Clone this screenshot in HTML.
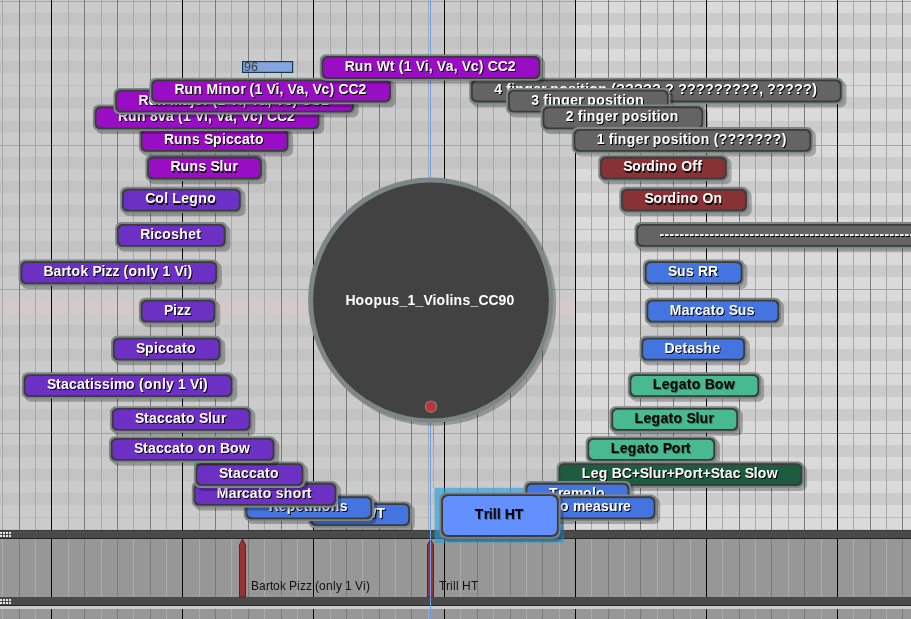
<!DOCTYPE html><html><head><meta charset="utf-8"><style>html,body{margin:0;padding:0;width:911px;height:619px;overflow:hidden;background:#cbcbcb;position:relative}</style></head><body><svg width="911" height="619" style="position:absolute;left:0;top:0;will-change:transform"><g shape-rendering="crispEdges"><rect x="0" y="0" width="575" height="1" fill="#cbcbcb"/><rect x="575" y="0" width="336" height="1" fill="#dadada"/><rect x="0" y="1" width="575" height="12" fill="#cbcbcb"/><rect x="575" y="1" width="336" height="12" fill="#dadada"/><rect x="0" y="13" width="575" height="12" fill="#c3c3c3"/><rect x="575" y="13" width="336" height="12" fill="#cbcbcb"/><rect x="0" y="25" width="575" height="12" fill="#cbcbcb"/><rect x="575" y="25" width="336" height="12" fill="#dadada"/><rect x="0" y="37" width="575" height="12" fill="#c3c3c3"/><rect x="575" y="37" width="336" height="12" fill="#cbcbcb"/><rect x="0" y="49" width="575" height="12" fill="#cbcbcb"/><rect x="575" y="49" width="336" height="12" fill="#dadada"/><rect x="0" y="61" width="575" height="12" fill="#c3c3c3"/><rect x="575" y="61" width="336" height="12" fill="#cbcbcb"/><rect x="0" y="73" width="575" height="12" fill="#cbcbcb"/><rect x="575" y="73" width="336" height="12" fill="#dadada"/><rect x="0" y="85" width="575" height="12" fill="#cbcbcb"/><rect x="575" y="85" width="336" height="12" fill="#dadada"/><rect x="0" y="97" width="575" height="12" fill="#c3c3c3"/><rect x="575" y="97" width="336" height="12" fill="#cbcbcb"/><rect x="0" y="109" width="575" height="12" fill="#cbcbcb"/><rect x="575" y="109" width="336" height="12" fill="#dadada"/><rect x="0" y="121" width="575" height="12" fill="#c3c3c3"/><rect x="575" y="121" width="336" height="12" fill="#cbcbcb"/><rect x="0" y="133" width="575" height="12" fill="#cbcbcb"/><rect x="575" y="133" width="336" height="12" fill="#dadada"/><rect x="0" y="145" width="575" height="12" fill="#cbcbcb"/><rect x="575" y="145" width="336" height="12" fill="#dadada"/><rect x="0" y="157" width="575" height="12" fill="#c3c3c3"/><rect x="575" y="157" width="336" height="12" fill="#cbcbcb"/><rect x="0" y="169" width="575" height="12" fill="#cbcbcb"/><rect x="575" y="169" width="336" height="12" fill="#dadada"/><rect x="0" y="181" width="575" height="12" fill="#c3c3c3"/><rect x="575" y="181" width="336" height="12" fill="#cbcbcb"/><rect x="0" y="193" width="575" height="12" fill="#cbcbcb"/><rect x="575" y="193" width="336" height="12" fill="#dadada"/><rect x="0" y="205" width="575" height="12" fill="#c3c3c3"/><rect x="575" y="205" width="336" height="12" fill="#cbcbcb"/><rect x="0" y="217" width="575" height="12" fill="#cbcbcb"/><rect x="575" y="217" width="336" height="12" fill="#dadada"/><rect x="0" y="229" width="575" height="12" fill="#cbcbcb"/><rect x="575" y="229" width="336" height="12" fill="#dadada"/><rect x="0" y="241" width="575" height="12" fill="#c3c3c3"/><rect x="575" y="241" width="336" height="12" fill="#cbcbcb"/><rect x="0" y="253" width="575" height="12" fill="#cbcbcb"/><rect x="575" y="253" width="336" height="12" fill="#dadada"/><rect x="0" y="265" width="575" height="12" fill="#c3c3c3"/><rect x="575" y="265" width="336" height="12" fill="#cbcbcb"/><rect x="0" y="277" width="575" height="12" fill="#cbcbcb"/><rect x="575" y="277" width="336" height="12" fill="#dadada"/><rect x="0" y="289" width="575" height="12" fill="#cbcbcb"/><rect x="575" y="289" width="336" height="12" fill="#dadada"/><rect x="0" y="301" width="575" height="12" fill="#d6c9c9"/><rect x="575" y="301" width="336" height="12" fill="#cbcbcb"/><rect x="0" y="313" width="575" height="12" fill="#cbcbcb"/><rect x="575" y="313" width="336" height="12" fill="#dadada"/><rect x="0" y="325" width="575" height="12" fill="#c3c3c3"/><rect x="575" y="325" width="336" height="12" fill="#cbcbcb"/><rect x="0" y="337" width="575" height="12" fill="#cbcbcb"/><rect x="575" y="337" width="336" height="12" fill="#dadada"/><rect x="0" y="349" width="575" height="12" fill="#c3c3c3"/><rect x="575" y="349" width="336" height="12" fill="#cbcbcb"/><rect x="0" y="361" width="575" height="12" fill="#cbcbcb"/><rect x="575" y="361" width="336" height="12" fill="#dadada"/><rect x="0" y="373" width="575" height="12" fill="#cbcbcb"/><rect x="575" y="373" width="336" height="12" fill="#dadada"/><rect x="0" y="385" width="575" height="12" fill="#c3c3c3"/><rect x="575" y="385" width="336" height="12" fill="#cbcbcb"/><rect x="0" y="397" width="575" height="12" fill="#cbcbcb"/><rect x="575" y="397" width="336" height="12" fill="#dadada"/><rect x="0" y="409" width="575" height="12" fill="#c3c3c3"/><rect x="575" y="409" width="336" height="12" fill="#cbcbcb"/><rect x="0" y="421" width="575" height="12" fill="#cbcbcb"/><rect x="575" y="421" width="336" height="12" fill="#dadada"/><rect x="0" y="433" width="575" height="12" fill="#cbcbcb"/><rect x="575" y="433" width="336" height="12" fill="#dadada"/><rect x="0" y="445" width="575" height="12" fill="#c3c3c3"/><rect x="575" y="445" width="336" height="12" fill="#cbcbcb"/><rect x="0" y="457" width="575" height="12" fill="#cbcbcb"/><rect x="575" y="457" width="336" height="12" fill="#dadada"/><rect x="0" y="469" width="575" height="12" fill="#c3c3c3"/><rect x="575" y="469" width="336" height="12" fill="#cbcbcb"/><rect x="0" y="481" width="575" height="12" fill="#cbcbcb"/><rect x="575" y="481" width="336" height="12" fill="#dadada"/><rect x="0" y="493" width="575" height="12" fill="#c3c3c3"/><rect x="575" y="493" width="336" height="12" fill="#cbcbcb"/><rect x="0" y="505" width="575" height="12" fill="#cbcbcb"/><rect x="575" y="505" width="336" height="12" fill="#dadada"/><rect x="0" y="517" width="575" height="12" fill="#cbcbcb"/><rect x="575" y="517" width="336" height="12" fill="#dadada"/><rect x="0" y="529" width="575" height="1" fill="#c3c3c3"/><rect x="575" y="529" width="336" height="1" fill="#cbcbcb"/><rect x="0" y="1" width="911" height="1" fill="#a4a4a4"/><rect x="0" y="85" width="911" height="1" fill="#bdbdbd"/><rect x="0" y="145" width="911" height="1" fill="#a4a4a4"/><rect x="0" y="229" width="911" height="1" fill="#bdbdbd"/><rect x="0" y="289" width="911" height="1" fill="#a4a4a4"/><rect x="0" y="373" width="911" height="1" fill="#bdbdbd"/><rect x="0" y="433" width="911" height="1" fill="#a4a4a4"/><rect x="0" y="517" width="911" height="1" fill="#bdbdbd"/><rect x="2" y="0" width="1" height="530" fill="#a8a8a8"/><rect x="19" y="0" width="1" height="530" fill="#7a7a7a"/><rect x="35" y="0" width="1" height="530" fill="#a8a8a8"/><rect x="51" y="0" width="1" height="530" fill="#060606"/><rect x="68" y="0" width="1" height="530" fill="#a8a8a8"/><rect x="84" y="0" width="1" height="530" fill="#7a7a7a"/><rect x="101" y="0" width="1" height="530" fill="#a8a8a8"/><rect x="117" y="0" width="1" height="530" fill="#7a7a7a"/><rect x="133" y="0" width="1" height="530" fill="#a8a8a8"/><rect x="150" y="0" width="1" height="530" fill="#7a7a7a"/><rect x="166" y="0" width="1" height="530" fill="#a8a8a8"/><rect x="182" y="0" width="1" height="530" fill="#060606"/><rect x="199" y="0" width="1" height="530" fill="#a8a8a8"/><rect x="215" y="0" width="1" height="530" fill="#7a7a7a"/><rect x="231" y="0" width="1" height="530" fill="#a8a8a8"/><rect x="248" y="0" width="1" height="530" fill="#7a7a7a"/><rect x="264" y="0" width="1" height="530" fill="#a8a8a8"/><rect x="281" y="0" width="1" height="530" fill="#7a7a7a"/><rect x="297" y="0" width="1" height="530" fill="#a8a8a8"/><rect x="313" y="0" width="1" height="530" fill="#060606"/><rect x="330" y="0" width="1" height="530" fill="#a8a8a8"/><rect x="346" y="0" width="1" height="530" fill="#7a7a7a"/><rect x="362" y="0" width="1" height="530" fill="#a8a8a8"/><rect x="379" y="0" width="1" height="530" fill="#7a7a7a"/><rect x="395" y="0" width="1" height="530" fill="#a8a8a8"/><rect x="411" y="0" width="1" height="530" fill="#7a7a7a"/><rect x="428" y="0" width="1" height="530" fill="#a8a8a8"/><rect x="444" y="0" width="1" height="530" fill="#060606"/><rect x="460" y="0" width="1" height="530" fill="#a8a8a8"/><rect x="477" y="0" width="1" height="530" fill="#7a7a7a"/><rect x="493" y="0" width="1" height="530" fill="#a8a8a8"/><rect x="510" y="0" width="1" height="530" fill="#7a7a7a"/><rect x="526" y="0" width="1" height="530" fill="#a8a8a8"/><rect x="542" y="0" width="1" height="530" fill="#7a7a7a"/><rect x="559" y="0" width="1" height="530" fill="#a8a8a8"/><rect x="575" y="0" width="1" height="530" fill="#060606"/><rect x="591" y="0" width="1" height="530" fill="#a8a8a8"/><rect x="608" y="0" width="1" height="530" fill="#7a7a7a"/><rect x="624" y="0" width="1" height="530" fill="#a8a8a8"/><rect x="640" y="0" width="1" height="530" fill="#7a7a7a"/><rect x="657" y="0" width="1" height="530" fill="#a8a8a8"/><rect x="673" y="0" width="1" height="530" fill="#7a7a7a"/><rect x="690" y="0" width="1" height="530" fill="#a8a8a8"/><rect x="706" y="0" width="1" height="530" fill="#060606"/><rect x="722" y="0" width="1" height="530" fill="#a8a8a8"/><rect x="739" y="0" width="1" height="530" fill="#7a7a7a"/><rect x="755" y="0" width="1" height="530" fill="#a8a8a8"/><rect x="771" y="0" width="1" height="530" fill="#7a7a7a"/><rect x="788" y="0" width="1" height="530" fill="#a8a8a8"/><rect x="804" y="0" width="1" height="530" fill="#7a7a7a"/><rect x="821" y="0" width="1" height="530" fill="#a8a8a8"/><rect x="837" y="0" width="1" height="530" fill="#060606"/><rect x="853" y="0" width="1" height="530" fill="#a8a8a8"/><rect x="870" y="0" width="1" height="530" fill="#7a7a7a"/><rect x="886" y="0" width="1" height="530" fill="#a8a8a8"/><rect x="902" y="0" width="1" height="530" fill="#7a7a7a"/><rect x="0" y="530" width="911" height="9" fill="#4a4a4a"/><rect x="0" y="530" width="911" height="1" fill="#3c3c3c"/><rect x="0" y="538" width="911" height="1" fill="#232323"/><rect x="0" y="539" width="911" height="58" fill="#979797"/><rect x="0" y="597" width="911" height="9" fill="#4a4a4a"/><rect x="0" y="605" width="911" height="1" fill="#232323"/><rect x="0" y="606" width="911" height="3" fill="#cbcbcb"/><rect x="0" y="609" width="911" height="10" fill="#979797"/><rect x="2" y="539" width="1" height="58" fill="#ababab"/><rect x="2" y="609" width="1" height="10" fill="#ababab"/><rect x="19" y="539" width="1" height="58" fill="#7a7a7a"/><rect x="19" y="609" width="1" height="10" fill="#7a7a7a"/><rect x="35" y="539" width="1" height="58" fill="#ababab"/><rect x="35" y="609" width="1" height="10" fill="#ababab"/><rect x="51" y="539" width="1" height="58" fill="#050505"/><rect x="51" y="609" width="1" height="10" fill="#050505"/><rect x="68" y="539" width="1" height="58" fill="#ababab"/><rect x="68" y="609" width="1" height="10" fill="#ababab"/><rect x="84" y="539" width="1" height="58" fill="#7a7a7a"/><rect x="84" y="609" width="1" height="10" fill="#7a7a7a"/><rect x="101" y="539" width="1" height="58" fill="#ababab"/><rect x="101" y="609" width="1" height="10" fill="#ababab"/><rect x="117" y="539" width="1" height="58" fill="#7a7a7a"/><rect x="117" y="609" width="1" height="10" fill="#7a7a7a"/><rect x="133" y="539" width="1" height="58" fill="#ababab"/><rect x="133" y="609" width="1" height="10" fill="#ababab"/><rect x="150" y="539" width="1" height="58" fill="#7a7a7a"/><rect x="150" y="609" width="1" height="10" fill="#7a7a7a"/><rect x="166" y="539" width="1" height="58" fill="#ababab"/><rect x="166" y="609" width="1" height="10" fill="#ababab"/><rect x="182" y="539" width="1" height="58" fill="#050505"/><rect x="182" y="609" width="1" height="10" fill="#050505"/><rect x="199" y="539" width="1" height="58" fill="#ababab"/><rect x="199" y="609" width="1" height="10" fill="#ababab"/><rect x="215" y="539" width="1" height="58" fill="#7a7a7a"/><rect x="215" y="609" width="1" height="10" fill="#7a7a7a"/><rect x="231" y="539" width="1" height="58" fill="#ababab"/><rect x="231" y="609" width="1" height="10" fill="#ababab"/><rect x="248" y="539" width="1" height="58" fill="#7a7a7a"/><rect x="248" y="609" width="1" height="10" fill="#7a7a7a"/><rect x="264" y="539" width="1" height="58" fill="#ababab"/><rect x="264" y="609" width="1" height="10" fill="#ababab"/><rect x="281" y="539" width="1" height="58" fill="#7a7a7a"/><rect x="281" y="609" width="1" height="10" fill="#7a7a7a"/><rect x="297" y="539" width="1" height="58" fill="#ababab"/><rect x="297" y="609" width="1" height="10" fill="#ababab"/><rect x="313" y="539" width="1" height="58" fill="#050505"/><rect x="313" y="609" width="1" height="10" fill="#050505"/><rect x="330" y="539" width="1" height="58" fill="#ababab"/><rect x="330" y="609" width="1" height="10" fill="#ababab"/><rect x="346" y="539" width="1" height="58" fill="#7a7a7a"/><rect x="346" y="609" width="1" height="10" fill="#7a7a7a"/><rect x="362" y="539" width="1" height="58" fill="#ababab"/><rect x="362" y="609" width="1" height="10" fill="#ababab"/><rect x="379" y="539" width="1" height="58" fill="#7a7a7a"/><rect x="379" y="609" width="1" height="10" fill="#7a7a7a"/><rect x="395" y="539" width="1" height="58" fill="#ababab"/><rect x="395" y="609" width="1" height="10" fill="#ababab"/><rect x="411" y="539" width="1" height="58" fill="#7a7a7a"/><rect x="411" y="609" width="1" height="10" fill="#7a7a7a"/><rect x="428" y="539" width="1" height="58" fill="#ababab"/><rect x="428" y="609" width="1" height="10" fill="#ababab"/><rect x="444" y="539" width="1" height="58" fill="#050505"/><rect x="444" y="609" width="1" height="10" fill="#050505"/><rect x="460" y="539" width="1" height="58" fill="#ababab"/><rect x="460" y="609" width="1" height="10" fill="#ababab"/><rect x="477" y="539" width="1" height="58" fill="#7a7a7a"/><rect x="477" y="609" width="1" height="10" fill="#7a7a7a"/><rect x="493" y="539" width="1" height="58" fill="#ababab"/><rect x="493" y="609" width="1" height="10" fill="#ababab"/><rect x="510" y="539" width="1" height="58" fill="#7a7a7a"/><rect x="510" y="609" width="1" height="10" fill="#7a7a7a"/><rect x="526" y="539" width="1" height="58" fill="#ababab"/><rect x="526" y="609" width="1" height="10" fill="#ababab"/><rect x="542" y="539" width="1" height="58" fill="#7a7a7a"/><rect x="542" y="609" width="1" height="10" fill="#7a7a7a"/><rect x="559" y="539" width="1" height="58" fill="#ababab"/><rect x="559" y="609" width="1" height="10" fill="#ababab"/><rect x="575" y="539" width="1" height="58" fill="#050505"/><rect x="575" y="609" width="1" height="10" fill="#050505"/><rect x="591" y="539" width="1" height="58" fill="#ababab"/><rect x="591" y="609" width="1" height="10" fill="#ababab"/><rect x="608" y="539" width="1" height="58" fill="#7a7a7a"/><rect x="608" y="609" width="1" height="10" fill="#7a7a7a"/><rect x="624" y="539" width="1" height="58" fill="#ababab"/><rect x="624" y="609" width="1" height="10" fill="#ababab"/><rect x="640" y="539" width="1" height="58" fill="#7a7a7a"/><rect x="640" y="609" width="1" height="10" fill="#7a7a7a"/><rect x="657" y="539" width="1" height="58" fill="#ababab"/><rect x="657" y="609" width="1" height="10" fill="#ababab"/><rect x="673" y="539" width="1" height="58" fill="#7a7a7a"/><rect x="673" y="609" width="1" height="10" fill="#7a7a7a"/><rect x="690" y="539" width="1" height="58" fill="#ababab"/><rect x="690" y="609" width="1" height="10" fill="#ababab"/><rect x="706" y="539" width="1" height="58" fill="#050505"/><rect x="706" y="609" width="1" height="10" fill="#050505"/><rect x="722" y="539" width="1" height="58" fill="#ababab"/><rect x="722" y="609" width="1" height="10" fill="#ababab"/><rect x="739" y="539" width="1" height="58" fill="#7a7a7a"/><rect x="739" y="609" width="1" height="10" fill="#7a7a7a"/><rect x="755" y="539" width="1" height="58" fill="#ababab"/><rect x="755" y="609" width="1" height="10" fill="#ababab"/><rect x="771" y="539" width="1" height="58" fill="#7a7a7a"/><rect x="771" y="609" width="1" height="10" fill="#7a7a7a"/><rect x="788" y="539" width="1" height="58" fill="#ababab"/><rect x="788" y="609" width="1" height="10" fill="#ababab"/><rect x="804" y="539" width="1" height="58" fill="#7a7a7a"/><rect x="804" y="609" width="1" height="10" fill="#7a7a7a"/><rect x="821" y="539" width="1" height="58" fill="#ababab"/><rect x="821" y="609" width="1" height="10" fill="#ababab"/><rect x="837" y="539" width="1" height="58" fill="#050505"/><rect x="837" y="609" width="1" height="10" fill="#050505"/><rect x="853" y="539" width="1" height="58" fill="#ababab"/><rect x="853" y="609" width="1" height="10" fill="#ababab"/><rect x="870" y="539" width="1" height="58" fill="#7a7a7a"/><rect x="870" y="609" width="1" height="10" fill="#7a7a7a"/><rect x="886" y="539" width="1" height="58" fill="#ababab"/><rect x="886" y="609" width="1" height="10" fill="#ababab"/><rect x="902" y="539" width="1" height="58" fill="#7a7a7a"/><rect x="902" y="609" width="1" height="10" fill="#7a7a7a"/><rect x="0" y="532" width="2" height="2" fill="#e6e6e6"/><rect x="0" y="535" width="2" height="2" fill="#e6e6e6"/><rect x="3" y="532" width="2" height="2" fill="#e6e6e6"/><rect x="3" y="535" width="2" height="2" fill="#e6e6e6"/><rect x="6" y="532" width="2" height="2" fill="#e6e6e6"/><rect x="6" y="535" width="2" height="2" fill="#e6e6e6"/><rect x="9" y="532" width="2" height="2" fill="#e6e6e6"/><rect x="9" y="535" width="2" height="2" fill="#e6e6e6"/><rect x="0" y="599" width="2" height="2" fill="#e6e6e6"/><rect x="0" y="602" width="2" height="2" fill="#e6e6e6"/><rect x="3" y="599" width="2" height="2" fill="#e6e6e6"/><rect x="3" y="602" width="2" height="2" fill="#e6e6e6"/><rect x="6" y="599" width="2" height="2" fill="#e6e6e6"/><rect x="6" y="602" width="2" height="2" fill="#e6e6e6"/><rect x="9" y="599" width="2" height="2" fill="#e6e6e6"/><rect x="9" y="602" width="2" height="2" fill="#e6e6e6"/></g><path d="M239.5 597 L239.5 545 L242.5 539 L245.5 545 L245.5 597 Z" fill="#993333" stroke="#6b1d1d" stroke-width="1"/><path d="M427.5 597 L427.5 545 L430.5 539 L433.5 545 L433.5 597 Z" fill="#993333" stroke="#6b1d1d" stroke-width="1"/><g transform="translate(0,589.50) scale(1,1.0)"><text x="251.0 259.0 266.0 270.0 273.0 280.0 286.0 289.0 297.0 300.0 306.0 312.0 315.0 319.0 326.0 333.0 336.0 342.0 345.0 352.0 355.0 363.0 366.0" y="0" font-family="Liberation Sans" font-weight="normal" font-size="12" fill="#111">Bartok Pizz (only 1 Vi)</text></g><g transform="translate(0,589.50) scale(1,1.0)"><text x="439.0 446.0 450.0 453.0 456.0 459.0 462.0 471.0" y="0" font-family="Liberation Sans" font-weight="normal" font-size="12" fill="#111">Trill HT</text></g><rect x="430" y="0" width="1" height="619" fill="#6fa0ef" shape-rendering="crispEdges"/><rect x="242.6" y="61.6" width="50" height="10.8" fill="#86a5dc" stroke="#0f3a58" stroke-width="1.2"/><text x="244" y="70.6" font-family="Liberation Sans" font-size="12.5" fill="#3c3c3c">96</text><circle cx="433.7" cy="303.2" r="122.6" fill="rgba(0,0,0,0.25)"/><circle cx="430.7" cy="300.2" r="122.6" fill="#7d8786"/><circle cx="431.0" cy="300.5" r="117.9" fill="#424242"/><g transform="translate(0,305.20) scale(1,1.1)"><text x="345.6 355.6 364.6 373.6 382.6 391.6 399.6 407.6 415.6 423.6 432.6 436.6 445.6 449.6 453.6 462.6 470.6 478.6 488.6 498.6 506.6" y="0" font-family="Liberation Sans" font-weight="bold" font-size="14" fill="#fff">Hoopus_1_Violins_CC90</text></g><circle cx="431" cy="406.6" r="6.2" fill="#7d8786"/><circle cx="431" cy="406.6" r="5" fill="#bf3434"/><rect x="433" y="423" width="1" height="20" fill="#4ab0e0" shape-rendering="crispEdges"/><rect x="433" y="443" width="1" height="45" fill="rgba(74,176,224,0.55)" shape-rendering="crispEdges"/><rect x="434.5" y="487.8" width="129.5" height="54.7" fill="rgba(30,160,225,0.62)"/><rect x="472.16" y="80.69" width="374.30" height="26.50" rx="6" fill="rgba(0,0,0,0.25)"/><rect x="469.16" y="77.69" width="374.30" height="26.50" rx="6" fill="#7d8786"/><rect x="470.96" y="79.49" width="370.70" height="22.90" rx="5.40" fill="#3b3b3b"/><rect x="472.76" y="81.29" width="367.10" height="19.30" rx="4.60" fill="#646464"/><g transform="translate(0,94.34) scale(1,1.1)"><text x="495.2 503.2 507.2 512.2 516.2 525.2 534.2 542.2 547.2 551.2 560.2 569.2 577.2 581.2 586.2 590.2 599.2 608.2 612.2 617.2 626.2 635.2 644.2 653.2 662.2 666.2 675.2 679.2 688.2 697.2 706.2 715.2 724.2 733.2 742.2 751.2 760.2 764.2 768.2 777.2 786.2 795.2 804.2 813.2" y="1" font-family="Liberation Sans" font-weight="bold" font-size="14" fill="#000">4 finger position (????? ? ?????????, ?????)</text><text x="494.2 502.2 506.2 511.2 515.2 524.2 533.2 541.2 546.2 550.2 559.2 568.2 576.2 580.2 585.2 589.2 598.2 607.2 611.2 616.2 625.2 634.2 643.2 652.2 661.2 665.2 674.2 678.2 687.2 696.2 705.2 714.2 723.2 732.2 741.2 750.2 759.2 763.2 767.2 776.2 785.2 794.2 803.2 812.2" y="0" font-family="Liberation Sans" font-weight="bold" font-size="14" fill="#fff">4 finger position (????? ? ?????????, ?????)</text></g><rect x="509.14" y="90.90" width="164.30" height="26.50" rx="6" fill="rgba(0,0,0,0.25)"/><rect x="506.14" y="87.90" width="164.30" height="26.50" rx="6" fill="#7d8786"/><rect x="507.94" y="89.70" width="160.70" height="22.90" rx="5.40" fill="#3b3b3b"/><rect x="509.74" y="91.50" width="157.10" height="19.30" rx="4.60" fill="#646464"/><g transform="translate(0,104.55) scale(1,1.1)"><text x="532.2 540.2 544.2 549.2 553.2 562.2 571.2 579.2 584.2 588.2 597.2 606.2 614.2 618.2 623.2 627.2 636.2" y="1" font-family="Liberation Sans" font-weight="bold" font-size="14" fill="#000">3 finger position</text><text x="531.2 539.2 543.2 548.2 552.2 561.2 570.2 578.2 583.2 587.2 596.2 605.2 613.2 617.2 622.2 626.2 635.2" y="0" font-family="Liberation Sans" font-weight="bold" font-size="14" fill="#fff">3 finger position</text></g><rect x="543.71" y="107.54" width="164.30" height="26.50" rx="6" fill="rgba(0,0,0,0.25)"/><rect x="540.71" y="104.54" width="164.30" height="26.50" rx="6" fill="#7d8786"/><rect x="542.51" y="106.34" width="160.70" height="22.90" rx="5.40" fill="#3b3b3b"/><rect x="544.31" y="108.14" width="157.10" height="19.30" rx="4.60" fill="#646464"/><g transform="translate(0,121.19) scale(1,1.1)"><text x="566.8 574.8 578.8 583.8 587.8 596.8 605.8 613.8 618.8 622.8 631.8 640.8 648.8 652.8 657.8 661.8 670.8" y="1" font-family="Liberation Sans" font-weight="bold" font-size="14" fill="#000">2 finger position</text><text x="565.8 573.8 577.8 582.8 586.8 595.8 604.8 612.8 617.8 621.8 630.8 639.8 647.8 651.8 656.8 660.8 669.8" y="0" font-family="Liberation Sans" font-weight="bold" font-size="14" fill="#fff">2 finger position</text></g><rect x="574.75" y="130.09" width="241.30" height="26.50" rx="6" fill="rgba(0,0,0,0.25)"/><rect x="571.75" y="127.09" width="241.30" height="26.50" rx="6" fill="#7d8786"/><rect x="573.55" y="128.89" width="237.70" height="22.90" rx="5.40" fill="#3b3b3b"/><rect x="575.35" y="130.69" width="234.10" height="19.30" rx="4.60" fill="#646464"/><g transform="translate(0,143.74) scale(1,1.1)"><text x="597.8 605.8 609.8 614.8 618.8 627.8 636.8 644.8 649.8 653.8 662.8 671.8 679.8 683.8 688.8 692.8 701.8 710.8 714.8 719.8 728.8 737.8 746.8 755.8 764.8 773.8 782.8" y="1" font-family="Liberation Sans" font-weight="bold" font-size="14" fill="#000">1 finger position (???????)</text><text x="596.8 604.8 608.8 613.8 617.8 626.8 635.8 643.8 648.8 652.8 661.8 670.8 678.8 682.8 687.8 691.8 700.8 709.8 713.8 718.8 727.8 736.8 745.8 754.8 763.8 772.8 781.8" y="0" font-family="Liberation Sans" font-weight="bold" font-size="14" fill="#fff">1 finger position (???????)</text></g><rect x="601.26" y="157.82" width="130.30" height="26.50" rx="6" fill="rgba(0,0,0,0.25)"/><rect x="598.26" y="154.82" width="130.30" height="26.50" rx="6" fill="#7d8786"/><rect x="600.06" y="156.62" width="126.70" height="22.90" rx="5.40" fill="#3b3b3b"/><rect x="601.86" y="158.42" width="123.10" height="19.30" rx="4.60" fill="#883235"/><g transform="translate(0,171.47) scale(1,1.1)"><text x="624.3 633.3 642.3 647.3 656.3 660.3 669.3 678.3 682.3 693.3 698.3" y="1" font-family="Liberation Sans" font-weight="bold" font-size="14" fill="#000">Sordino Off</text><text x="623.3 632.3 641.3 646.3 655.3 659.3 668.3 677.3 681.3 692.3 697.3" y="0" font-family="Liberation Sans" font-weight="bold" font-size="14" fill="#fff">Sordino Off</text></g><rect x="622.40" y="189.84" width="129.30" height="26.50" rx="6" fill="rgba(0,0,0,0.25)"/><rect x="619.40" y="186.84" width="129.30" height="26.50" rx="6" fill="#7d8786"/><rect x="621.20" y="188.64" width="125.70" height="22.90" rx="5.40" fill="#3b3b3b"/><rect x="623.00" y="190.44" width="122.10" height="19.30" rx="4.60" fill="#883235"/><g transform="translate(0,203.49) scale(1,1.1)"><text x="645.4 654.4 663.4 668.4 677.4 681.4 690.4 699.4 703.4 714.4" y="1" font-family="Liberation Sans" font-weight="bold" font-size="14" fill="#000">Sordino On</text><text x="644.4 653.4 662.4 667.4 676.4 680.4 689.4 698.4 702.4 713.4" y="0" font-family="Liberation Sans" font-weight="bold" font-size="14" fill="#fff">Sordino On</text></g><rect x="637.48" y="225.12" width="401.30" height="26.50" rx="6" fill="rgba(0,0,0,0.25)"/><rect x="634.48" y="222.12" width="401.30" height="26.50" rx="6" fill="#7d8786"/><rect x="636.28" y="223.92" width="397.70" height="22.90" rx="5.40" fill="#3b3b3b"/><rect x="638.08" y="225.72" width="394.10" height="19.30" rx="4.60" fill="#646464"/><g transform="translate(0,238.77) scale(1,1.1)"><text x="660.5 665.5 670.5 675.5 680.5 685.5 690.5 695.5 700.5 705.5 710.5 715.5 720.5 725.5 730.5 735.5 740.5 745.5 750.5 755.5 760.5 765.5 770.5 775.5 780.5 785.5 790.5 795.5 800.5 805.5 810.5 815.5 820.5 825.5 830.5 835.5 840.5 845.5 850.5 855.5 860.5 865.5 870.5 875.5 880.5 885.5 890.5 895.5 900.5 905.5 910.5 915.5 920.5 925.5 930.5 935.5 940.5 945.5 950.5 955.5 960.5 965.5 970.5 975.5 980.5 985.5 990.5 995.5 1000.5 1005.5" y="1" font-family="Liberation Sans" font-weight="bold" font-size="14" fill="#000">----------------------------------------------------------------------</text><text x="659.5 664.5 669.5 674.5 679.5 684.5 689.5 694.5 699.5 704.5 709.5 714.5 719.5 724.5 729.5 734.5 739.5 744.5 749.5 754.5 759.5 764.5 769.5 774.5 779.5 784.5 789.5 794.5 799.5 804.5 809.5 814.5 819.5 824.5 829.5 834.5 839.5 844.5 849.5 854.5 859.5 864.5 869.5 874.5 879.5 884.5 889.5 894.5 899.5 904.5 909.5 914.5 919.5 924.5 929.5 934.5 939.5 944.5 949.5 954.5 959.5 964.5 969.5 974.5 979.5 984.5 989.5 994.5 999.5 1004.5" y="0" font-family="Liberation Sans" font-weight="bold" font-size="14" fill="#fff">----------------------------------------------------------------------</text></g><rect x="646.01" y="262.52" width="101.30" height="26.50" rx="6" fill="rgba(0,0,0,0.25)"/><rect x="643.01" y="259.52" width="101.30" height="26.50" rx="6" fill="#7d8786"/><rect x="644.81" y="261.32" width="97.70" height="22.90" rx="5.40" fill="#3b3b3b"/><rect x="646.61" y="263.12" width="94.10" height="19.30" rx="4.60" fill="#4374e0"/><g transform="translate(0,276.17) scale(1,1.1)"><text x="669.1 678.1 687.1 695.1 699.1 709.1" y="1" font-family="Liberation Sans" font-weight="bold" font-size="14" fill="#000">Sus RR</text><text x="668.1 677.1 686.1 694.1 698.1 708.1" y="0" font-family="Liberation Sans" font-weight="bold" font-size="14" fill="#fff">Sus RR</text></g><rect x="647.73" y="300.85" width="136.30" height="26.50" rx="6" fill="rgba(0,0,0,0.25)"/><rect x="644.73" y="297.85" width="136.30" height="26.50" rx="6" fill="#7d8786"/><rect x="646.53" y="299.65" width="132.70" height="22.90" rx="5.40" fill="#3b3b3b"/><rect x="648.33" y="301.45" width="129.10" height="19.30" rx="4.60" fill="#4374e0"/><g transform="translate(0,314.50) scale(1,1.1)"><text x="670.8 682.8 690.8 695.8 703.8 711.8 716.8 725.8 729.8 738.8 747.8" y="1" font-family="Liberation Sans" font-weight="bold" font-size="14" fill="#000">Marcato Sus</text><text x="669.8 681.8 689.8 694.8 702.8 710.8 715.8 724.8 728.8 737.8 746.8" y="0" font-family="Liberation Sans" font-weight="bold" font-size="14" fill="#fff">Marcato Sus</text></g><rect x="642.58" y="338.87" width="107.30" height="26.50" rx="6" fill="rgba(0,0,0,0.25)"/><rect x="639.58" y="335.87" width="107.30" height="26.50" rx="6" fill="#7d8786"/><rect x="641.38" y="337.67" width="103.70" height="22.90" rx="5.40" fill="#3b3b3b"/><rect x="643.18" y="339.47" width="100.10" height="19.30" rx="4.60" fill="#4374e0"/><g transform="translate(0,352.52) scale(1,1.1)"><text x="665.6 675.6 683.6 688.6 696.6 704.6 713.6" y="1" font-family="Liberation Sans" font-weight="bold" font-size="14" fill="#000">Detashe</text><text x="664.6 674.6 682.6 687.6 695.6 703.6 712.6" y="0" font-family="Liberation Sans" font-weight="bold" font-size="14" fill="#fff">Detashe</text></g><rect x="630.73" y="375.36" width="133.30" height="26.50" rx="6" fill="rgba(0,0,0,0.25)"/><rect x="627.73" y="372.36" width="133.30" height="26.50" rx="6" fill="#7d8786"/><rect x="629.53" y="374.16" width="129.70" height="22.90" rx="5.40" fill="#3b3b3b"/><rect x="631.33" y="375.96" width="126.10" height="19.30" rx="4.60" fill="#48b991"/><g transform="translate(0,389.01) scale(1,1.1)"><text x="653.8 662.8 670.8 679.8 687.8 692.8 701.8 705.8 715.8 724.8" y="1" font-family="Liberation Sans" font-weight="bold" font-size="14" fill="rgba(0,0,0,0.35)">Legato Bow</text><text x="652.8 661.8 669.8 678.8 686.8 691.8 700.8 704.8 714.8 723.8" y="0" font-family="Liberation Sans" font-weight="bold" font-size="14" fill="#000">Legato Bow</text></g><rect x="612.55" y="409.14" width="130.30" height="26.50" rx="6" fill="rgba(0,0,0,0.25)"/><rect x="609.55" y="406.14" width="130.30" height="26.50" rx="6" fill="#7d8786"/><rect x="611.35" y="407.94" width="126.70" height="22.90" rx="5.40" fill="#3b3b3b"/><rect x="613.15" y="409.74" width="123.10" height="19.30" rx="4.60" fill="#48b991"/><g transform="translate(0,422.79) scale(1,1.1)"><text x="635.6 644.6 652.6 661.6 669.6 674.6 683.6 687.6 696.6 700.6 709.6" y="1" font-family="Liberation Sans" font-weight="bold" font-size="14" fill="rgba(0,0,0,0.35)">Legato Slur</text><text x="634.6 643.6 651.6 660.6 668.6 673.6 682.6 686.6 695.6 699.6 708.6" y="0" font-family="Liberation Sans" font-weight="bold" font-size="14" fill="#000">Legato Slur</text></g><rect x="588.63" y="439.14" width="131.30" height="26.50" rx="6" fill="rgba(0,0,0,0.25)"/><rect x="585.63" y="436.14" width="131.30" height="26.50" rx="6" fill="#7d8786"/><rect x="587.43" y="437.94" width="127.70" height="22.90" rx="5.40" fill="#3b3b3b"/><rect x="589.23" y="439.74" width="124.10" height="19.30" rx="4.60" fill="#48b991"/><g transform="translate(0,452.79) scale(1,1.1)"><text x="611.7 620.7 628.7 637.7 645.7 650.7 659.7 663.7 672.7 681.7 686.7" y="1" font-family="Liberation Sans" font-weight="bold" font-size="14" fill="rgba(0,0,0,0.35)">Legato Port</text><text x="610.7 619.7 627.7 636.7 644.7 649.7 658.7 662.7 671.7 680.7 685.7" y="0" font-family="Liberation Sans" font-weight="bold" font-size="14" fill="#000">Legato Port</text></g><rect x="559.74" y="464.38" width="247.30" height="26.50" rx="6" fill="rgba(0,0,0,0.25)"/><rect x="556.74" y="461.38" width="247.30" height="26.50" rx="6" fill="#7d8786"/><rect x="558.54" y="463.18" width="243.70" height="22.90" rx="5.40" fill="#3b3b3b"/><rect x="560.34" y="464.98" width="240.10" height="19.30" rx="4.60" fill="#1d5c3f"/><g transform="translate(0,478.03) scale(1,1.1)"><text x="582.8 591.8 599.8 608.8 612.8 622.8 632.8 640.8 649.8 653.8 662.8 667.8 675.8 684.8 693.8 698.8 703.8 711.8 720.8 725.8 733.8 741.8 745.8 754.8 758.8 767.8" y="1" font-family="Liberation Sans" font-weight="bold" font-size="14" fill="#000">Leg BC+Slur+Port+Stac Slow</text><text x="581.8 590.8 598.8 607.8 611.8 621.8 631.8 639.8 648.8 652.8 661.8 666.8 674.8 683.8 692.8 697.8 702.8 710.8 719.8 724.8 732.8 740.8 744.8 753.8 757.8 766.8" y="0" font-family="Liberation Sans" font-weight="bold" font-size="14" fill="#fff">Leg BC+Slur+Port+Stac Slow</text></g><rect x="526.80" y="484.06" width="107.30" height="26.50" rx="6" fill="rgba(0,0,0,0.25)"/><rect x="523.80" y="481.06" width="107.30" height="26.50" rx="6" fill="#7d8786"/><rect x="525.60" y="482.86" width="103.70" height="22.90" rx="5.40" fill="#3b3b3b"/><rect x="527.40" y="484.66" width="100.10" height="19.30" rx="4.60" fill="#4374e0"/><g transform="translate(0,497.71) scale(1,1.1)"><text x="549.9 558.9 563.9 571.9 583.9 592.9 596.9" y="1" font-family="Liberation Sans" font-weight="bold" font-size="14" fill="#000">Tremolo</text><text x="548.9 557.9 562.9 570.9 582.9 591.9 595.9" y="0" font-family="Liberation Sans" font-weight="bold" font-size="14" fill="#fff">Tremolo</text></g><rect x="490.88" y="497.54" width="169.30" height="26.50" rx="6" fill="rgba(0,0,0,0.25)"/><rect x="487.88" y="494.54" width="169.30" height="26.50" rx="6" fill="#7d8786"/><rect x="489.68" y="496.34" width="165.70" height="22.90" rx="5.40" fill="#3b3b3b"/><rect x="491.48" y="498.14" width="162.10" height="19.30" rx="4.60" fill="#4374e0"/><g transform="translate(0,511.19) scale(1,1.1)"><text x="513.9 522.9 527.9 535.9 547.9 556.9 560.9 569.9 573.9 585.9 593.9 601.9 609.9 618.9 623.9" y="1" font-family="Liberation Sans" font-weight="bold" font-size="14" fill="#000">Tremolo measure</text><text x="512.9 521.9 526.9 534.9 546.9 555.9 559.9 568.9 572.9 584.9 592.9 600.9 608.9 617.9 622.9" y="0" font-family="Liberation Sans" font-weight="bold" font-size="14" fill="#fff">Tremolo measure</text></g><rect x="311.47" y="504.39" width="103.30" height="26.50" rx="6" fill="rgba(0,0,0,0.25)"/><rect x="308.47" y="501.39" width="103.30" height="26.50" rx="6" fill="#7d8786"/><rect x="310.27" y="503.19" width="99.70" height="22.90" rx="5.40" fill="#3b3b3b"/><rect x="312.07" y="504.99" width="96.10" height="19.30" rx="4.60" fill="#4374e0"/><g transform="translate(0,518.04) scale(1,1.1)"><text x="334.5 343.5 348.5 352.5 356.5 360.5 364.5 377.5" y="1" font-family="Liberation Sans" font-weight="bold" font-size="14" fill="#000">Trill WT</text><text x="333.5 342.5 347.5 351.5 355.5 359.5 363.5 376.5" y="0" font-family="Liberation Sans" font-weight="bold" font-size="14" fill="#fff">Trill WT</text></g><rect x="246.72" y="497.54" width="130.30" height="26.50" rx="6" fill="rgba(0,0,0,0.25)"/><rect x="243.72" y="494.54" width="130.30" height="26.50" rx="6" fill="#7d8786"/><rect x="245.52" y="496.34" width="126.70" height="22.90" rx="5.40" fill="#3b3b3b"/><rect x="247.32" y="498.14" width="123.10" height="19.30" rx="4.60" fill="#4374e0"/><g transform="translate(0,511.19) scale(1,1.1)"><text x="269.8 279.8 287.8 296.8 304.8 309.8 313.8 318.8 322.8 331.8 340.8" y="1" font-family="Liberation Sans" font-weight="bold" font-size="14" fill="#000">Repetitions</text><text x="268.8 278.8 286.8 295.8 303.8 308.8 312.8 317.8 321.8 330.8 339.8" y="0" font-family="Liberation Sans" font-weight="bold" font-size="14" fill="#fff">Repetitions</text></g><rect x="194.80" y="484.06" width="146.30" height="26.50" rx="6" fill="rgba(0,0,0,0.25)"/><rect x="191.80" y="481.06" width="146.30" height="26.50" rx="6" fill="#7d8786"/><rect x="193.60" y="482.86" width="142.70" height="22.90" rx="5.40" fill="#3b3b3b"/><rect x="195.40" y="484.66" width="139.10" height="19.30" rx="4.60" fill="#6c30c5"/><g transform="translate(0,497.71) scale(1,1.1)"><text x="217.8 229.8 237.8 242.8 250.8 258.8 263.8 272.8 276.8 284.8 293.8 302.8 307.8" y="1" font-family="Liberation Sans" font-weight="bold" font-size="14" fill="#000">Marcato short</text><text x="216.8 228.8 236.8 241.8 249.8 257.8 262.8 271.8 275.8 283.8 292.8 301.8 306.8" y="0" font-family="Liberation Sans" font-weight="bold" font-size="14" fill="#fff">Marcato short</text></g><rect x="196.86" y="464.38" width="111.30" height="26.50" rx="6" fill="rgba(0,0,0,0.25)"/><rect x="193.86" y="461.38" width="111.30" height="26.50" rx="6" fill="#7d8786"/><rect x="195.66" y="463.18" width="107.70" height="22.90" rx="5.40" fill="#3b3b3b"/><rect x="197.46" y="464.98" width="104.10" height="19.30" rx="4.60" fill="#6c30c5"/><g transform="translate(0,478.03) scale(1,1.1)"><text x="219.9 228.9 233.9 241.9 249.9 257.9 265.9 270.9" y="1" font-family="Liberation Sans" font-weight="bold" font-size="14" fill="#000">Staccato</text><text x="218.9 227.9 232.9 240.9 248.9 256.9 264.9 269.9" y="0" font-family="Liberation Sans" font-weight="bold" font-size="14" fill="#fff">Staccato</text></g><rect x="111.97" y="439.14" width="167.30" height="26.50" rx="6" fill="rgba(0,0,0,0.25)"/><rect x="108.97" y="436.14" width="167.30" height="26.50" rx="6" fill="#7d8786"/><rect x="110.77" y="437.94" width="163.70" height="22.90" rx="5.40" fill="#3b3b3b"/><rect x="112.57" y="439.74" width="160.10" height="19.30" rx="4.60" fill="#6c30c5"/><g transform="translate(0,452.79) scale(1,1.1)"><text x="135.0 144.0 149.0 157.0 165.0 173.0 181.0 186.0 195.0 199.0 208.0 217.0 221.0 231.0 240.0" y="1" font-family="Liberation Sans" font-weight="bold" font-size="14" fill="#000">Staccato on Bow</text><text x="134.0 143.0 148.0 156.0 164.0 172.0 180.0 185.0 194.0 198.0 207.0 216.0 220.0 230.0 239.0" y="0" font-family="Liberation Sans" font-weight="bold" font-size="14" fill="#fff">Staccato on Bow</text></g><rect x="113.05" y="409.14" width="142.30" height="26.50" rx="6" fill="rgba(0,0,0,0.25)"/><rect x="110.05" y="406.14" width="142.30" height="26.50" rx="6" fill="#7d8786"/><rect x="111.85" y="407.94" width="138.70" height="22.90" rx="5.40" fill="#3b3b3b"/><rect x="113.65" y="409.74" width="135.10" height="19.30" rx="4.60" fill="#6c30c5"/><g transform="translate(0,422.79) scale(1,1.1)"><text x="136.1 145.1 150.1 158.1 166.1 174.1 182.1 187.1 196.1 200.1 209.1 213.1 222.1" y="1" font-family="Liberation Sans" font-weight="bold" font-size="14" fill="#000">Staccato Slur</text><text x="135.1 144.1 149.1 157.1 165.1 173.1 181.1 186.1 195.1 199.1 208.1 212.1 221.1" y="0" font-family="Liberation Sans" font-weight="bold" font-size="14" fill="#fff">Staccato Slur</text></g><rect x="24.87" y="375.36" width="212.30" height="26.50" rx="6" fill="rgba(0,0,0,0.25)"/><rect x="21.87" y="372.36" width="212.30" height="26.50" rx="6" fill="#7d8786"/><rect x="23.67" y="374.16" width="208.70" height="22.90" rx="5.40" fill="#3b3b3b"/><rect x="25.47" y="375.96" width="205.10" height="19.30" rx="4.60" fill="#6c30c5"/><g transform="translate(0,389.01) scale(1,1.1)"><text x="47.9 56.9 61.9 69.9 77.9 85.9 90.9 94.9 102.9 110.9 114.9 126.9 135.9 139.9 144.9 153.9 162.9 166.9 174.9 178.9 186.9 190.9 199.9 203.9" y="1" font-family="Liberation Sans" font-weight="bold" font-size="14" fill="#000">Stacatissimo (only 1 Vi)</text><text x="46.9 55.9 60.9 68.9 76.9 84.9 89.9 93.9 101.9 109.9 113.9 125.9 134.9 138.9 143.9 152.9 161.9 165.9 173.9 177.9 185.9 189.9 198.9 202.9" y="0" font-family="Liberation Sans" font-weight="bold" font-size="14" fill="#fff">Stacatissimo (only 1 Vi)</text></g><rect x="114.02" y="338.87" width="111.30" height="26.50" rx="6" fill="rgba(0,0,0,0.25)"/><rect x="111.02" y="335.87" width="111.30" height="26.50" rx="6" fill="#7d8786"/><rect x="112.82" y="337.67" width="107.70" height="22.90" rx="5.40" fill="#3b3b3b"/><rect x="114.62" y="339.47" width="104.10" height="19.30" rx="4.60" fill="#6c30c5"/><g transform="translate(0,352.52) scale(1,1.1)"><text x="137.1 146.1 155.1 159.1 167.1 175.1 183.1 188.1" y="1" font-family="Liberation Sans" font-weight="bold" font-size="14" fill="#000">Spiccato</text><text x="136.1 145.1 154.1 158.1 166.1 174.1 182.1 187.1" y="0" font-family="Liberation Sans" font-weight="bold" font-size="14" fill="#fff">Spiccato</text></g><rect x="141.87" y="300.85" width="78.30" height="26.50" rx="6" fill="rgba(0,0,0,0.25)"/><rect x="138.87" y="297.85" width="78.30" height="26.50" rx="6" fill="#7d8786"/><rect x="140.67" y="299.65" width="74.70" height="22.90" rx="5.40" fill="#3b3b3b"/><rect x="142.47" y="301.45" width="71.10" height="19.30" rx="4.60" fill="#6c30c5"/><g transform="translate(0,314.50) scale(1,1.1)"><text x="164.9 173.9 177.9 184.9" y="1" font-family="Liberation Sans" font-weight="bold" font-size="14" fill="#000">Pizz</text><text x="163.9 172.9 176.9 183.9" y="0" font-family="Liberation Sans" font-weight="bold" font-size="14" fill="#fff">Pizz</text></g><rect x="21.59" y="262.52" width="200.30" height="26.50" rx="6" fill="rgba(0,0,0,0.25)"/><rect x="18.59" y="259.52" width="200.30" height="26.50" rx="6" fill="#7d8786"/><rect x="20.39" y="261.32" width="196.70" height="22.90" rx="5.40" fill="#3b3b3b"/><rect x="22.19" y="263.12" width="193.10" height="19.30" rx="4.60" fill="#6c30c5"/><g transform="translate(0,276.17) scale(1,1.1)"><text x="44.6 54.6 62.6 67.6 72.6 81.6 89.6 93.6 102.6 106.6 113.6 120.6 124.6 129.6 138.6 147.6 151.6 159.6 163.6 171.6 175.6 184.6 188.6" y="1" font-family="Liberation Sans" font-weight="bold" font-size="14" fill="#000">Bartok Pizz (only 1 Vi)</text><text x="43.6 53.6 61.6 66.6 71.6 80.6 88.6 92.6 101.6 105.6 112.6 119.6 123.6 128.6 137.6 146.6 150.6 158.6 162.6 170.6 174.6 183.6 187.6" y="0" font-family="Liberation Sans" font-weight="bold" font-size="14" fill="#fff">Bartok Pizz (only 1 Vi)</text></g><rect x="118.12" y="225.12" width="112.30" height="26.50" rx="6" fill="rgba(0,0,0,0.25)"/><rect x="115.12" y="222.12" width="112.30" height="26.50" rx="6" fill="#7d8786"/><rect x="116.92" y="223.92" width="108.70" height="22.90" rx="5.40" fill="#3b3b3b"/><rect x="118.72" y="225.72" width="105.10" height="19.30" rx="4.60" fill="#6c30c5"/><g transform="translate(0,238.77) scale(1,1.1)"><text x="141.2 151.2 155.2 163.2 172.2 180.2 189.2 197.2" y="1" font-family="Liberation Sans" font-weight="bold" font-size="14" fill="#000">Ricoshet</text><text x="140.2 150.2 154.2 162.2 171.2 179.2 188.2 196.2" y="0" font-family="Liberation Sans" font-weight="bold" font-size="14" fill="#fff">Ricoshet</text></g><rect x="123.20" y="189.84" width="122.30" height="26.50" rx="6" fill="rgba(0,0,0,0.25)"/><rect x="120.20" y="186.84" width="122.30" height="26.50" rx="6" fill="#7d8786"/><rect x="122.00" y="188.64" width="118.70" height="22.90" rx="5.40" fill="#3b3b3b"/><rect x="123.80" y="190.44" width="115.10" height="19.30" rx="4.60" fill="#6c30c5"/><g transform="translate(0,203.49) scale(1,1.1)"><text x="146.3 156.3 165.3 169.3 173.3 182.3 190.3 199.3 208.3" y="1" font-family="Liberation Sans" font-weight="bold" font-size="14" fill="#000">Col Legno</text><text x="145.3 155.3 164.3 168.3 172.3 181.3 189.3 198.3 207.3" y="0" font-family="Liberation Sans" font-weight="bold" font-size="14" fill="#fff">Col Legno</text></g><rect x="148.34" y="157.82" width="118.30" height="26.50" rx="6" fill="rgba(0,0,0,0.25)"/><rect x="145.34" y="154.82" width="118.30" height="26.50" rx="6" fill="#7d8786"/><rect x="147.14" y="156.62" width="114.70" height="22.90" rx="5.40" fill="#3b3b3b"/><rect x="148.94" y="158.42" width="111.10" height="19.30" rx="4.60" fill="#990dc4"/><g transform="translate(0,171.47) scale(1,1.1)"><text x="171.4 181.4 190.4 199.4 207.4 211.4 220.4 224.4 233.4" y="1" font-family="Liberation Sans" font-weight="bold" font-size="14" fill="#000">Runs Slur</text><text x="170.4 180.4 189.4 198.4 206.4 210.4 219.4 223.4 232.4" y="0" font-family="Liberation Sans" font-weight="bold" font-size="14" fill="#fff">Runs Slur</text></g><rect x="141.85" y="130.09" width="151.30" height="26.50" rx="6" fill="rgba(0,0,0,0.25)"/><rect x="138.85" y="127.09" width="151.30" height="26.50" rx="6" fill="#7d8786"/><rect x="140.65" y="128.89" width="147.70" height="22.90" rx="5.40" fill="#3b3b3b"/><rect x="142.45" y="130.69" width="144.10" height="19.30" rx="4.60" fill="#990dc4"/><g transform="translate(0,143.74) scale(1,1.1)"><text x="164.9 174.9 183.9 192.9 200.9 204.9 213.9 222.9 226.9 234.9 242.9 250.9 255.9" y="1" font-family="Liberation Sans" font-weight="bold" font-size="14" fill="#000">Runs Spiccato</text><text x="163.9 173.9 182.9 191.9 199.9 203.9 212.9 221.9 225.9 233.9 241.9 249.9 254.9" y="0" font-family="Liberation Sans" font-weight="bold" font-size="14" fill="#fff">Runs Spiccato</text></g><rect x="95.89" y="107.54" width="228.30" height="26.50" rx="6" fill="rgba(0,0,0,0.25)"/><rect x="92.89" y="104.54" width="228.30" height="26.50" rx="6" fill="#7d8786"/><rect x="94.69" y="106.34" width="224.70" height="22.90" rx="5.40" fill="#3b3b3b"/><rect x="96.49" y="108.14" width="221.10" height="19.30" rx="4.60" fill="#990dc4"/><g transform="translate(0,121.19) scale(1,1.1)"><text x="118.9 128.9 137.9 146.9 150.9 158.9 166.9 174.9 178.9 183.9 191.9 195.9 204.9 208.9 212.9 216.9 225.9 233.9 237.9 241.9 250.9 258.9 263.9 267.9 277.9 287.9" y="1" font-family="Liberation Sans" font-weight="bold" font-size="14" fill="#000">Run 8va (1 Vi, Va, Vc) CC2</text><text x="117.9 127.9 136.9 145.9 149.9 157.9 165.9 173.9 177.9 182.9 190.9 194.9 203.9 207.9 211.9 215.9 224.9 232.9 236.9 240.9 249.9 257.9 262.9 266.9 276.9 286.9" y="0" font-family="Liberation Sans" font-weight="bold" font-size="14" fill="#fff">Run 8va (1 Vi, Va, Vc) CC2</text></g><rect x="116.46" y="90.90" width="242.30" height="26.50" rx="6" fill="rgba(0,0,0,0.25)"/><rect x="113.46" y="87.90" width="242.30" height="26.50" rx="6" fill="#7d8786"/><rect x="115.26" y="89.70" width="238.70" height="22.90" rx="5.40" fill="#3b3b3b"/><rect x="117.06" y="91.50" width="235.10" height="19.30" rx="4.60" fill="#990dc4"/><g transform="translate(0,104.55) scale(1,1.1)"><text x="139.5 149.5 158.5 167.5 171.5 183.5 191.5 195.5 204.5 209.5 213.5 218.5 226.5 230.5 239.5 243.5 247.5 251.5 260.5 268.5 272.5 276.5 285.5 293.5 298.5 302.5 312.5 322.5" y="1" font-family="Liberation Sans" font-weight="bold" font-size="14" fill="#000">Run Major (1 Vi, Va, Vc) CC2</text><text x="138.5 148.5 157.5 166.5 170.5 182.5 190.5 194.5 203.5 208.5 212.5 217.5 225.5 229.5 238.5 242.5 246.5 250.5 259.5 267.5 271.5 275.5 284.5 292.5 297.5 301.5 311.5 321.5" y="0" font-family="Liberation Sans" font-weight="bold" font-size="14" fill="#fff">Run Major (1 Vi, Va, Vc) CC2</text></g><rect x="152.44" y="80.69" width="243.30" height="26.50" rx="6" fill="rgba(0,0,0,0.25)"/><rect x="149.44" y="77.69" width="243.30" height="26.50" rx="6" fill="#7d8786"/><rect x="151.24" y="79.49" width="239.70" height="22.90" rx="5.40" fill="#3b3b3b"/><rect x="153.04" y="81.29" width="236.10" height="19.30" rx="4.60" fill="#990dc4"/><g transform="translate(0,94.34) scale(1,1.1)"><text x="175.5 185.5 194.5 203.5 207.5 219.5 223.5 232.5 241.5 246.5 250.5 255.5 263.5 267.5 276.5 280.5 284.5 288.5 297.5 305.5 309.5 313.5 322.5 330.5 335.5 339.5 349.5 359.5" y="1" font-family="Liberation Sans" font-weight="bold" font-size="14" fill="#000">Run Minor (1 Vi, Va, Vc) CC2</text><text x="174.5 184.5 193.5 202.5 206.5 218.5 222.5 231.5 240.5 245.5 249.5 254.5 262.5 266.5 275.5 279.5 283.5 287.5 296.5 304.5 308.5 312.5 321.5 329.5 334.5 338.5 348.5 358.5" y="0" font-family="Liberation Sans" font-weight="bold" font-size="14" fill="#fff">Run Minor (1 Vi, Va, Vc) CC2</text></g><rect x="322.80" y="57.30" width="222.30" height="26.50" rx="6" fill="rgba(0,0,0,0.25)"/><rect x="319.80" y="54.30" width="222.30" height="26.50" rx="6" fill="#7d8786"/><rect x="321.60" y="56.10" width="218.70" height="22.90" rx="5.40" fill="#3b3b3b"/><rect x="323.40" y="57.90" width="215.10" height="19.30" rx="4.60" fill="#990dc4"/><g transform="translate(0,70.95) scale(1,1.1)"><text x="345.8 355.8 364.8 373.8 377.8 390.8 395.8 399.8 404.8 412.8 416.8 425.8 429.8 433.8 437.8 446.8 454.8 458.8 462.8 471.8 479.8 484.8 488.8 498.8 508.8" y="1" font-family="Liberation Sans" font-weight="bold" font-size="14" fill="#000">Run Wt (1 Vi, Va, Vc) CC2</text><text x="344.8 354.8 363.8 372.8 376.8 389.8 394.8 398.8 403.8 411.8 415.8 424.8 428.8 432.8 436.8 445.8 453.8 457.8 461.8 470.8 478.8 483.8 487.8 497.8 507.8" y="0" font-family="Liberation Sans" font-weight="bold" font-size="14" fill="#fff">Run Wt (1 Vi, Va, Vc) CC2</text></g><rect x="442.40" y="495.40" width="121.10" height="46.30" rx="7" fill="rgba(0,0,0,0.25)"/><rect x="439.40" y="492.40" width="121.10" height="46.30" rx="7" fill="#808080"/><rect x="441.20" y="494.20" width="117.50" height="42.70" rx="6.40" fill="#3c3c3c"/><rect x="443.00" y="496.00" width="113.90" height="39.10" rx="5.60" fill="#6291ff"/><g transform="translate(0,518.95) scale(1,1.1)"><text x="475.8 484.8 489.8 493.8 497.8 501.8 505.8 515.8" y="1" font-family="Liberation Sans" font-weight="bold" font-size="14" fill="rgba(0,0,0,0.35)">Trill HT</text><text x="474.8 483.8 488.8 492.8 496.8 500.8 504.8 514.8" y="0" font-family="Liberation Sans" font-weight="bold" font-size="14" fill="#000">Trill HT</text></g></svg></body></html>
